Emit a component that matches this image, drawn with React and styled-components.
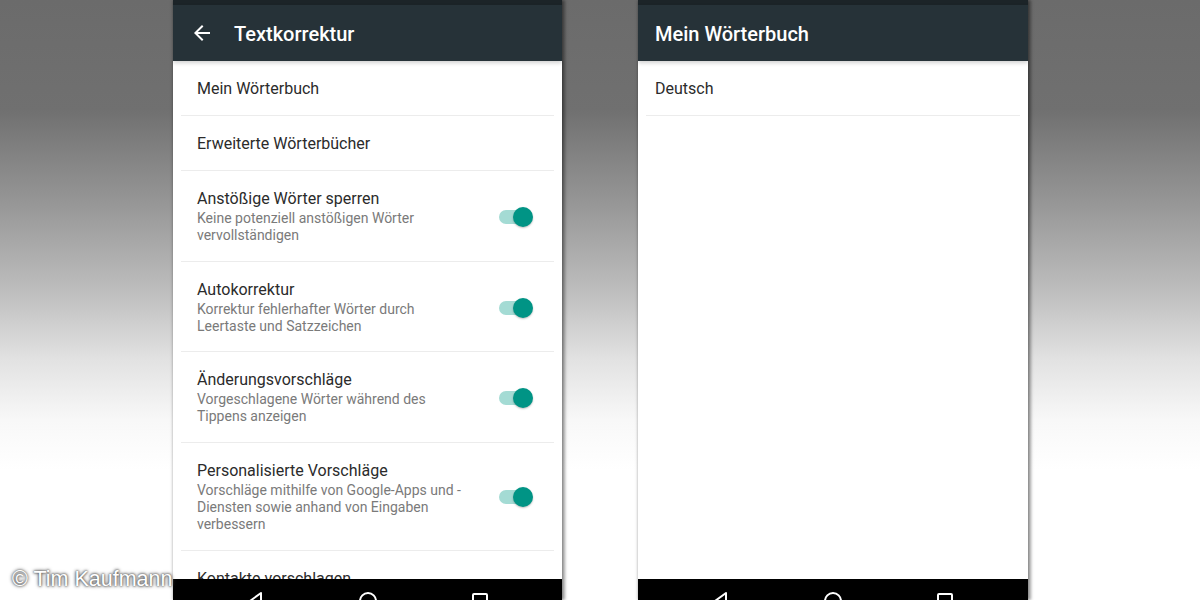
import React from "react";
import styled, { createGlobalStyle } from "styled-components";

const Global = createGlobalStyle`
  html, body { margin: 0; padding: 0; }
  body {
    font-family: Roboto, "Noto Sans", sans-serif;
    -webkit-font-smoothing: antialiased;
  }
`;

const Stage = styled.div`
  position: relative;
  width: 1200px;
  height: 600px;
  overflow: hidden;
  display: flex;
  gap: 76px;
  padding-left: 173px;
  box-sizing: border-box;
  background: linear-gradient(
    to bottom,
    #6b6b6b 0px,
    #707070 110px,
    #959595 200px,
    #bdbdbd 290px,
    #e2e2e2 360px,
    #f8f8f8 420px,
    #ffffff 470px
  );
`;

const Phone = styled.div`
  width: ${(p) => p.$w}px;
  height: 600px;
  display: flex;
  flex-direction: column;
  background: #fff;
  box-shadow: 0 0 3px rgba(0, 0, 0, 0.35), 3px 0 3px rgba(0, 0, 0, 0.35);
  overflow: hidden;
`;

const StatusBar = styled.div`
  height: 5px;
  flex: none;
  background: #1c2428;
`;

const Toolbar = styled.div`
  position: relative;
  z-index: 1;
  height: 56px;
  flex: none;
  display: flex;
  align-items: center;
  gap: 20px;
  padding-left: 17px;
  background: #263238;
  box-shadow: 0 2px 4px rgba(0, 0, 0, 0.18);
`;

const Title = styled.div`
  color: #fff;
  font-size: 20px;
  font-weight: 500;
  margin-top: 1px;
`;

const List = styled.div`
  flex: 1;
  overflow: hidden;
  display: flex;
  flex-direction: column;
`;

const Row = styled.div`
  display: flex;
  align-items: center;
  margin: 0 8px;
  padding: 18px 21px 16px ${(p) => p.$indent}px;
  border-bottom: 1px solid #ececec;
  flex: none;
`;

const RowText = styled.div`
  flex: 1;
  min-width: 0;
`;

const RowTitle = styled.div`
  font-size: 16px;
  line-height: 20px;
  color: #2b2b2b;
`;

const RowSub = styled.div`
  font-size: 14px;
  line-height: 17px;
  margin: 1px 0 0.7px;
  color: #7a7a7a;
  max-width: 276px;
`;

const Switch = styled.div`
  position: relative;
  width: 34px;
  height: 20px;
  flex: none;
`;

const Track = styled.div`
  position: absolute;
  left: 0;
  top: 3px;
  width: 31px;
  height: 14px;
  border-radius: 7px;
  background: #a4dbd4;
`;

const Thumb = styled.div`
  position: absolute;
  right: 0;
  top: 0;
  width: 20px;
  height: 20px;
  border-radius: 50%;
  background: #009485;
  box-shadow: 0 1px 2px rgba(0, 0, 0, 0.25);
`;

const NavBar = styled.div`
  height: 21px;
  flex: none;
  background: #000;
  display: flex;
  justify-content: center;
  align-items: flex-start;
  gap: 92px;
  padding-top: 12px;
  overflow: hidden;
  box-sizing: border-box;
`;

const NavIcon = styled.svg`
  width: 20px;
  height: 20px;
  flex: none;
`;

const Credit = styled.div`
  position: absolute;
  left: 12px;
  top: 566px;
  font-family: "Liberation Sans", Arial, sans-serif;
  font-size: 21.5px;
  line-height: 26px;
  color: #fff;
  text-shadow: 0 0 2px #555, 0 0 3px #666, 0 0 4px #888;
`;

const BackArrow = () => (
  <svg width="24" height="24" viewBox="0 0 24 24">
    <path
      fill="#fff"
      d="M20 11H7.83l5.59-5.59L12 4l-8 8 8 8 1.41-1.41L7.83 13H20v-2z"
    />
  </svg>
);

const Toggle = () => (
  <Switch>
    <Track />
    <Thumb />
  </Switch>
);

const Nav = () => (
  <NavBar>
    <NavIcon viewBox="0 0 20 20">
      <path d="M15 2 L4 10 L15 18 Z" fill="none" stroke="#fff" strokeWidth="2" strokeLinejoin="round" />
    </NavIcon>
    <NavIcon viewBox="0 0 20 20">
      <circle cx="10" cy="10" r="8" fill="none" stroke="#fff" strokeWidth="2" />
    </NavIcon>
    <NavIcon viewBox="0 0 20 20">
      <rect x="3" y="3" width="14" height="14" rx="1" fill="none" stroke="#fff" strokeWidth="2" />
    </NavIcon>
  </NavBar>
);

const settings = [
  { title: "Mein Wörterbuch" },
  { title: "Erweiterte Wörterbücher" },
  {
    title: "Anstößige Wörter sperren",
    sub: "Keine potenziell anstößigen Wörter vervollständigen",
    toggle: true,
  },
  {
    title: "Autokorrektur",
    sub: "Korrektur fehlerhafter Wörter durch Leertaste und Satzzeichen",
    toggle: true,
  },
  {
    title: "Änderungsvorschläge",
    sub: "Vorgeschlagene Wörter während des Tippens anzeigen",
    toggle: true,
  },
  {
    title: "Personalisierte Vorschläge",
    sub: "Vorschläge mithilfe von Google-Apps und\u00A0- Diensten sowie anhand von Eingaben verbessern",
    toggle: true,
  },
  { title: "Kontakte vorschlagen" },
];

export default function App() {
  return (
    <>
      <Global />
      <Stage>
        <Phone $w={389}>
          <StatusBar />
          <Toolbar>
            <BackArrow />
            <Title>Textkorrektur</Title>
          </Toolbar>
          <List>
            {settings.map((s) => (
              <Row key={s.title} $indent={16}>
                <RowText>
                  <RowTitle>{s.title}</RowTitle>
                  {s.sub && <RowSub>{s.sub}</RowSub>}
                </RowText>
                {s.toggle && <Toggle />}
              </Row>
            ))}
          </List>
          <Nav />
        </Phone>
        <Phone $w={390}>
          <StatusBar />
          <Toolbar>
            <Title>Mein Wörterbuch</Title>
          </Toolbar>
          <List>
            <Row $indent={9}>
              <RowText>
                <RowTitle>Deutsch</RowTitle>
              </RowText>
            </Row>
          </List>
          <Nav />
        </Phone>
        <Credit>© Tim Kaufmann</Credit>
      </Stage>
    </>
  );
}
